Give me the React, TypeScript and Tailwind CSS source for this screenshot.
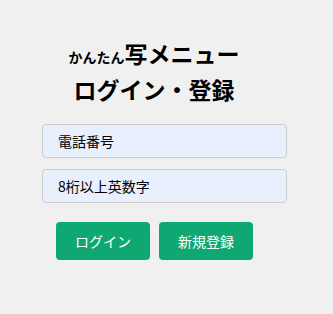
export default function App() {
  return (
    <div
      className="min-h-screen w-full bg-[#f0f0f0] pt-[37px]"
      style={{ fontFamily: '"Noto Sans CJK JP", "Noto Sans", sans-serif' }}
    >
      {/* Title */}
      <div className="w-[308px] text-center font-bold text-black">
        <h1 className="text-[23px] leading-[32px]">
          <span className="text-[14px]">かんたん</span>写メニュー
        </h1>
        <h2 className="text-[23px] leading-[33px]">ログイン・登録</h2>
      </div>

      {/* Form */}
      <div className="mt-[18px] ml-[42px] flex w-[245px] flex-col gap-[11px]">
        <input
          type="text"
          defaultValue="電話番号"
          className="h-[34px] w-full rounded-[4px] border border-[#cccccc] bg-[#e8f0fe] px-[15px] text-[14px] text-black outline-none"
        />
        <input
          type="text"
          defaultValue="8桁以上英数字"
          className="h-[34px] w-full rounded-[4px] border border-[#cccccc] bg-[#e8f0fe] px-[15px] text-[14px] text-black outline-none"
        />
      </div>

      <div className="mt-[19px] ml-[56px] flex gap-[9px]">
        <button className="h-[38px] w-[94px] rounded-[4px] bg-[#0fa872] text-[14px] text-white">
          ログイン
        </button>
        <button className="h-[38px] w-[94px] rounded-[4px] bg-[#0fa872] text-[14px] text-white">
          新規登録
        </button>
      </div>
    </div>
  )
}
